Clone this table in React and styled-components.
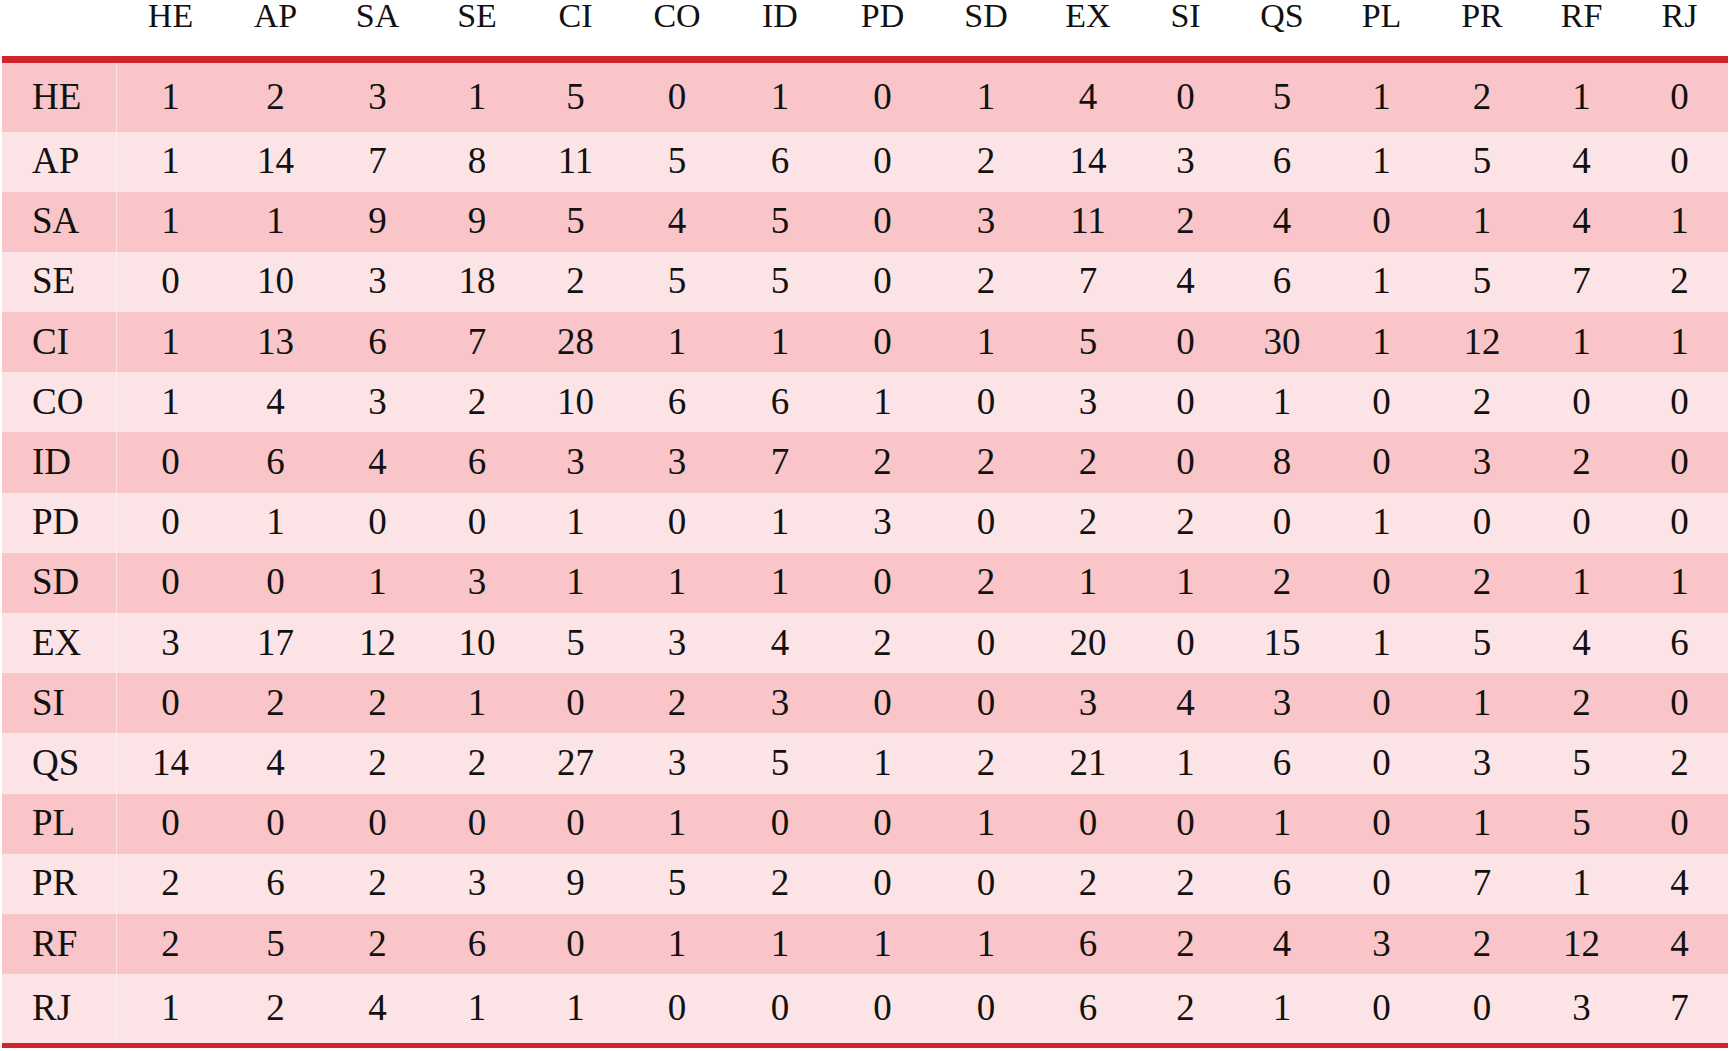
import React from "react";
import styled, { createGlobalStyle } from "styled-components";

const GlobalStyle = createGlobalStyle`
  html, body {
    margin: 0;
    padding: 0;
    background: #ffffff;
  }
`;

const COLUMNS = "115px 107px 103px 101px 98px 99px 104px 102px 103px 104px 100px 95px 98px 101px 100px 99px 97px";

const HEADS = ["HE", "AP", "SA", "SE", "CI", "CO", "ID", "PD", "SD", "EX", "SI", "QS", "PL", "PR", "RF", "RJ"];

const DATA = [
  ["HE", [1, 2, 3, 1, 5, 0, 1, 0, 1, 4, 0, 5, 1, 2, 1, 0]],
  ["AP", [1, 14, 7, 8, 11, 5, 6, 0, 2, 14, 3, 6, 1, 5, 4, 0]],
  ["SA", [1, 1, 9, 9, 5, 4, 5, 0, 3, 11, 2, 4, 0, 1, 4, 1]],
  ["SE", [0, 10, 3, 18, 2, 5, 5, 0, 2, 7, 4, 6, 1, 5, 7, 2]],
  ["CI", [1, 13, 6, 7, 28, 1, 1, 0, 1, 5, 0, 30, 1, 12, 1, 1]],
  ["CO", [1, 4, 3, 2, 10, 6, 6, 1, 0, 3, 0, 1, 0, 2, 0, 0]],
  ["ID", [0, 6, 4, 6, 3, 3, 7, 2, 2, 2, 0, 8, 0, 3, 2, 0]],
  ["PD", [0, 1, 0, 0, 1, 0, 1, 3, 0, 2, 2, 0, 1, 0, 0, 0]],
  ["SD", [0, 0, 1, 3, 1, 1, 1, 0, 2, 1, 1, 2, 0, 2, 1, 1]],
  ["EX", [3, 17, 12, 10, 5, 3, 4, 2, 0, 20, 0, 15, 1, 5, 4, 6]],
  ["SI", [0, 2, 2, 1, 0, 2, 3, 0, 0, 3, 4, 3, 0, 1, 2, 0]],
  ["QS", [14, 4, 2, 2, 27, 3, 5, 1, 2, 21, 1, 6, 0, 3, 5, 2]],
  ["PL", [0, 0, 0, 0, 0, 1, 0, 0, 1, 0, 0, 1, 0, 1, 5, 0]],
  ["PR", [2, 6, 2, 3, 9, 5, 2, 0, 0, 2, 2, 6, 0, 7, 1, 4]],
  ["RF", [2, 5, 2, 6, 0, 1, 1, 1, 1, 6, 2, 4, 3, 2, 12, 4]],
  ["RJ", [1, 2, 4, 1, 1, 0, 0, 0, 0, 6, 2, 1, 0, 0, 3, 7]],
];

const Table = styled.div`
  width: 1726px;
  margin-left: 2px;
  font-family: "Liberation Serif", "DejaVu Serif", serif;
  color: #111111;
`;

const HeaderRow = styled.div`
  display: grid;
  grid-template-columns: ${COLUMNS};
  height: 56px;
  border-bottom: 7px solid #d1232b;
`;

const HeadCell = styled.div`
  font-size: 34px;
  line-height: 32px;
  text-align: center;
`;

const Body = styled.div`
  border-bottom: 5px solid #d1232b;
`;

const Row = styled.div`
  display: grid;
  grid-template-columns: ${COLUMNS};
  height: ${(p) => p.$height}px;
  background: ${(p) => (p.$dark ? "#f9c5c8" : "#fce3e5")};
`;

const Cell = styled.div`
  display: flex;
  align-items: center;
  justify-content: center;
  padding-bottom: 2px;
  font-size: 37px;
  line-height: 37px;
`;

const LabelCell = styled(Cell)`
  justify-content: flex-start;
  padding-left: 30px;
  border-right: 1px solid rgba(255, 255, 255, 0.5);
`;

const rowHeight = (i) => (i === 0 || i === DATA.length - 1 ? 68.5 : 60.2);

export default function App() {
  return (
    <>
      <GlobalStyle />
      <Table>
        <HeaderRow>
          <HeadCell />
          {HEADS.map((h) => (
            <HeadCell key={h}>{h}</HeadCell>
          ))}
        </HeaderRow>
        <Body>
          {DATA.map(([label, values], i) => (
            <Row key={label} $dark={i % 2 === 0} $height={rowHeight(i)}>
              <LabelCell>{label}</LabelCell>
              {values.map((v, j) => (
                <Cell key={j}>{v}</Cell>
              ))}
            </Row>
          ))}
        </Body>
      </Table>
    </>
  );
}
